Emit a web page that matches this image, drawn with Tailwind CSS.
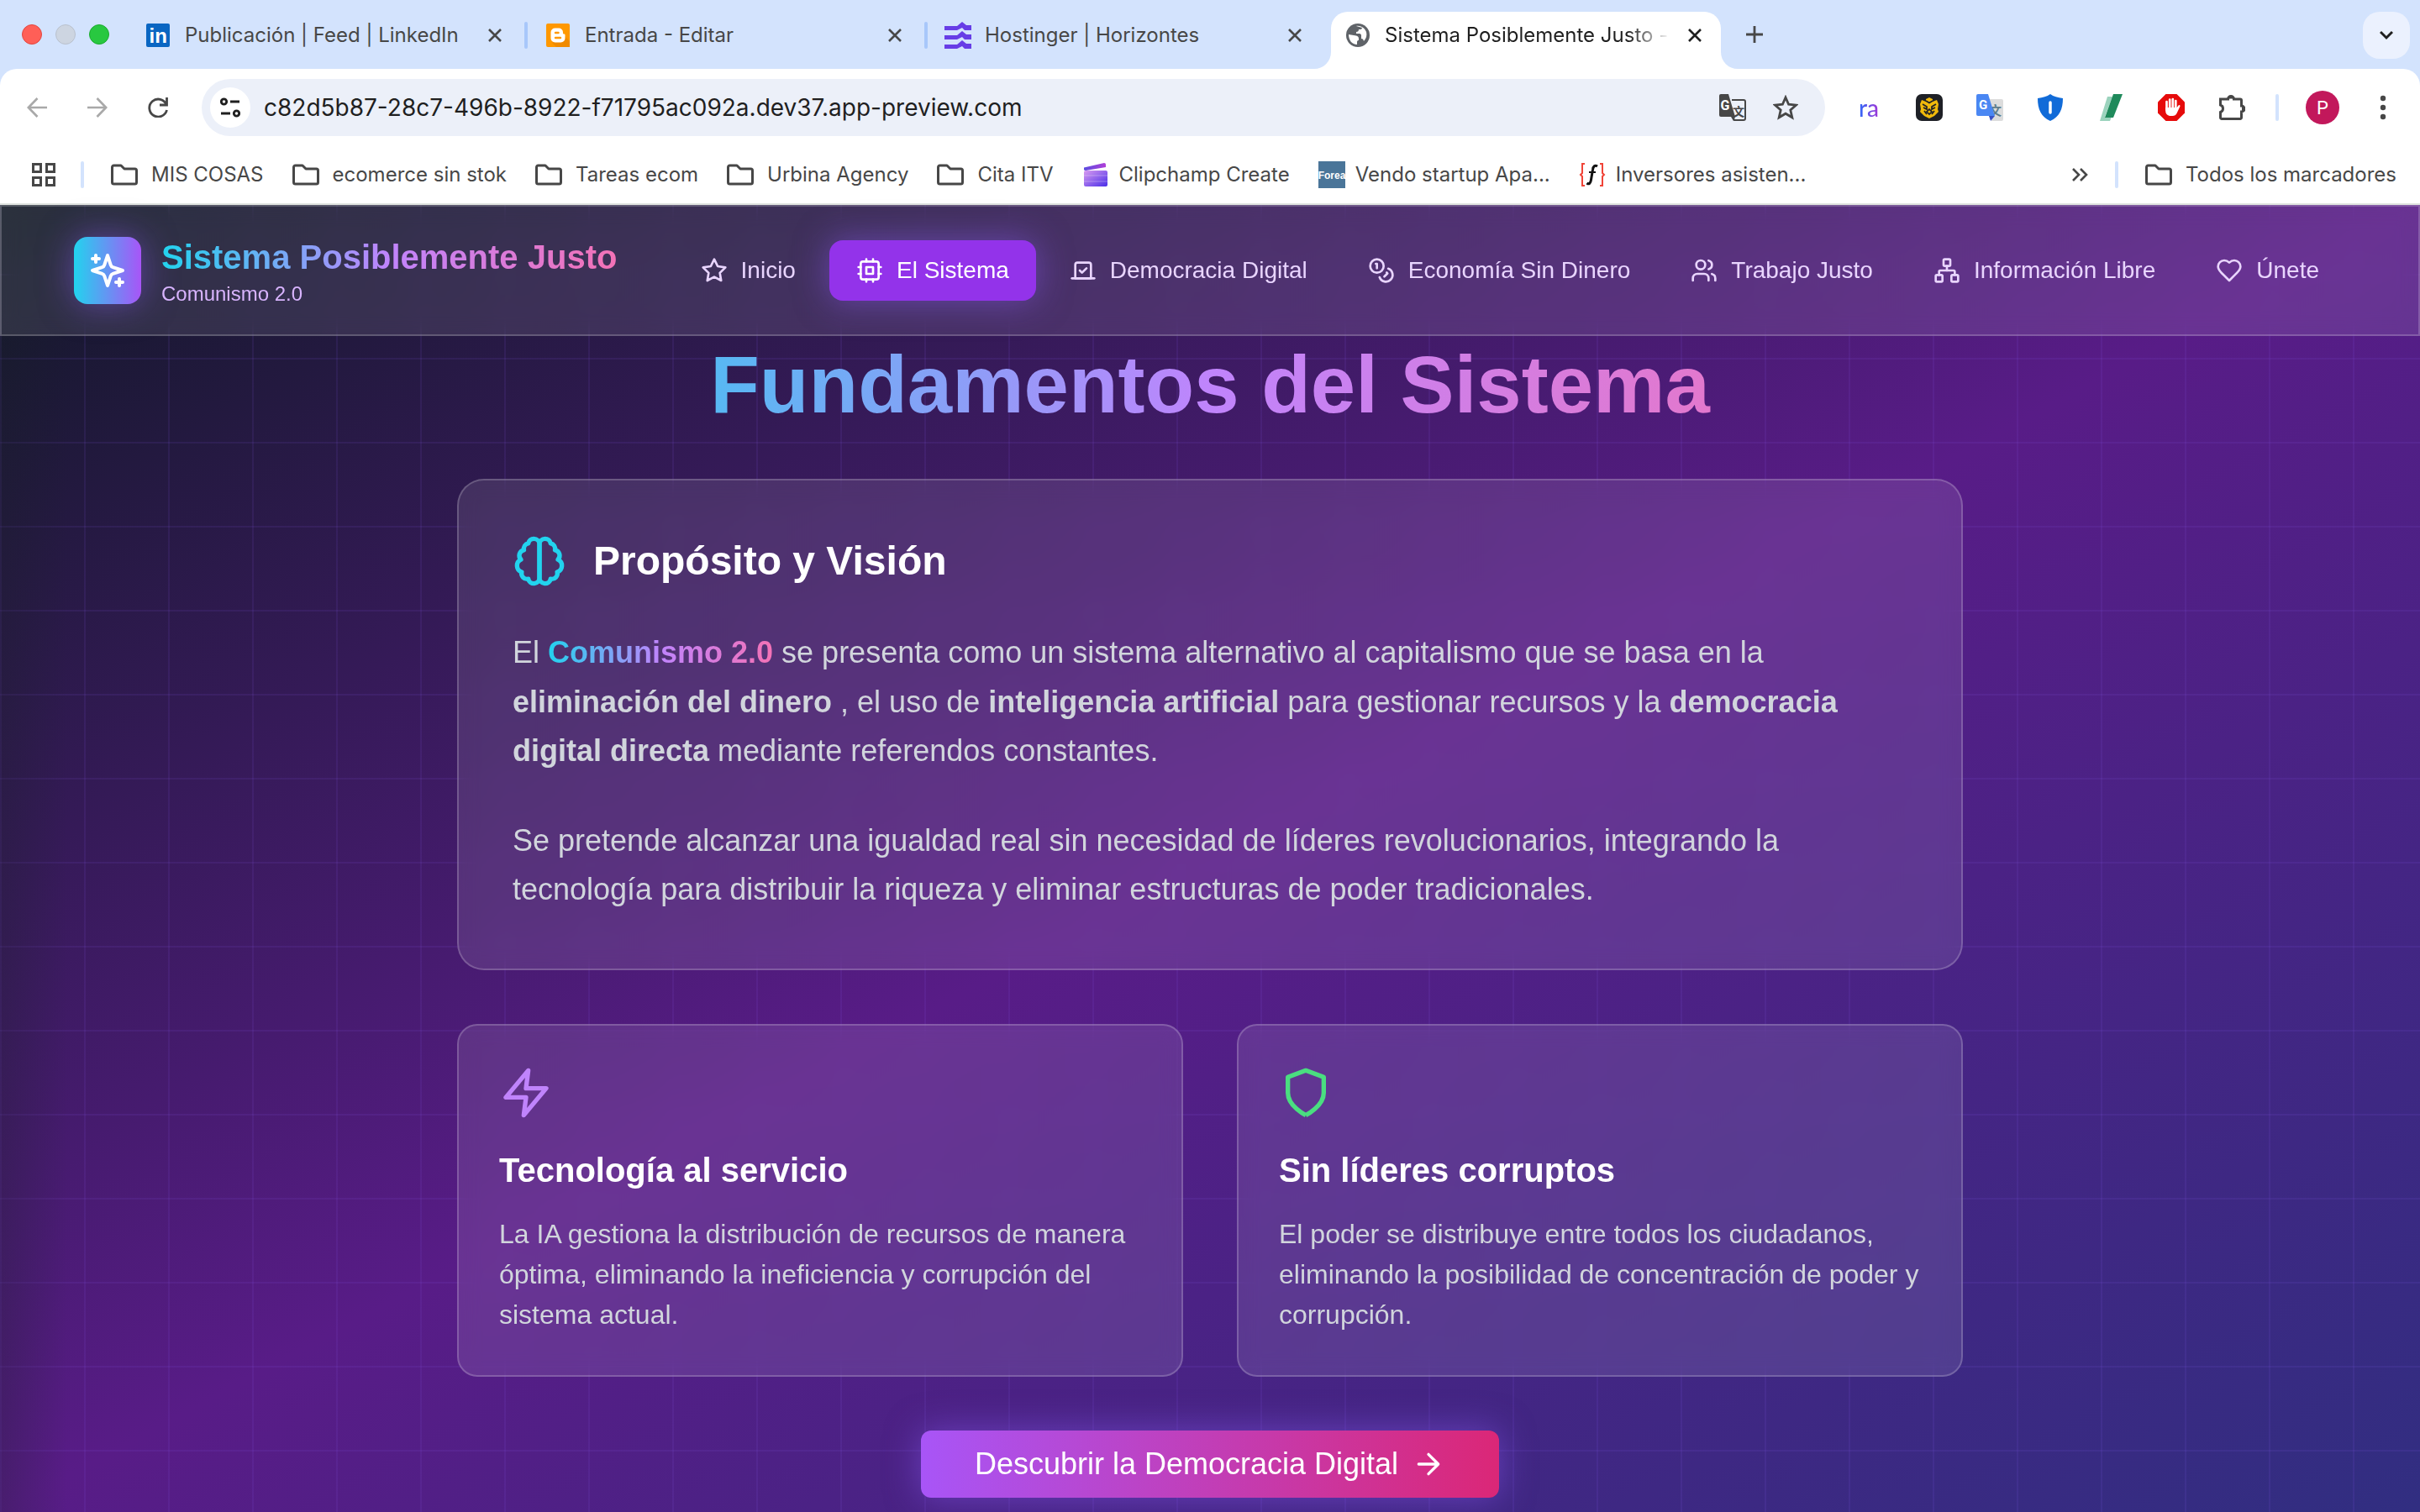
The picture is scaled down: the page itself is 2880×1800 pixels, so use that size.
<!DOCTYPE html>
<html lang="es">
<head>
    <meta charset="utf-8"/>
    <meta content="width=device-width, initial-scale=1.0" name="viewport"/>
    <title>Sistema Posiblemente Justo</title>
    <script src="https://cdn.jsdelivr.net/npm/@tailwindcss/browser@4"></script>
</head>
<body class="min-h-screen flex flex-col bg-[#d3e3fd] font-['Inter',sans-serif] text-[#474747]">
    <!-- shared icons -->
    <svg class="hidden" aria-hidden="true">
        <symbol id="close" viewBox="0 0 18 18"><path d="M2 2l14 14M16 2L2 16" fill="none" stroke="currentColor" stroke-width="2.6"/></symbol>
        <symbol id="folder" viewBox="0 0 32 26"><path d="M3.5 2h8.5l4 4h12.500a2 2 0 0 1 2 2v14a2 2 0 0 1-2 2h-25a2 2 0 0 1-2-2V4a2 2 0 0 1 2-2z" fill="none" stroke="currentColor" stroke-width="3" stroke-linejoin="round"/></symbol>
    </svg>

    <!-- tab strip -->
    <div class="flex h-[82px] pl-[26px]">
        <div class="flex items-center gap-4 w-[124px] shrink-0">
            <span class="size-6 rounded-full bg-[#ff5f57] border border-[#e2463f]"></span>
            <span class="size-6 rounded-full bg-[#cdd5e1] border border-[#b9c1cd]"></span>
            <span class="size-6 rounded-full bg-[#28c840] border border-[#1aab2c]"></span>
        </div>
        <div class="grid grid-cols-4 flex-1 max-w-[1904px]">
            <div class="relative flex items-center px-6 pt-0.5">
                <svg class="size-7 shrink-0" viewBox="0 0 28 28"><rect width="28" height="28" rx="2" fill="#0a66c2"/><text x="3.500" y="23" font-family="Liberation Sans" font-weight="700" font-size="24" fill="#fff">in</text></svg>
                <button class="ml-[18px] flex-1 text-left text-[24px] whitespace-nowrap overflow-hidden">Publicación | Feed | LinkedIn</button>
                <button aria-label="Cerrar" class="mr-1"><svg class="size-[18px]"><use href="#close"/></svg></button>
                <span class="absolute -right-0.5 top-[26px] h-8 w-1 rounded-full bg-[#a8c7fa]"></span>
            </div>
            <div class="relative flex items-center px-6 pt-0.5">
                <svg class="size-7 shrink-0" viewBox="0 0 28 28"><rect width="28" height="28" rx="2" fill="#ff9800"/><path d="M22 15l6 6v7H12l-5-5z" fill="#f08a00"/><path d="M10.500 5.500h4.500a5 5 0 0 1 5 5v.5c0 1 .5 1.500 1.300 1.500.7 0 1.200.5 1.200 1.200V17.500a5 5 0 0 1-5 5h-7a5 5 0 0 1-5-5v-7a5 5 0 0 1 5-5z" fill="#fff"/><path d="M11 11h3.500M11 17h6" stroke="#ff9800" stroke-width="2.400" stroke-linecap="round"/></svg>
                <button class="ml-[18px] flex-1 text-left text-[24px] whitespace-nowrap overflow-hidden">Entrada - Editar</button>
                <button aria-label="Cerrar" class="mr-1"><svg class="size-[18px]"><use href="#close"/></svg></button>
                <span class="absolute -right-0.5 top-[26px] h-8 w-1 rounded-full bg-[#a8c7fa]"></span>
            </div>
            <div class="relative flex items-center px-[22px] pt-0.5">
                <svg class="size-8 shrink-0" viewBox="0 0 32 32" fill="#673de6"><path d="M0 5h15l6-5 5 4h6v6h-8l-3-3-6 3H0zM0 16h15l6-5 5 4h6v6h-8l-3-3-6 3H0zM0 27h15l6-5 5 4h6v6h-8l-3-3-6 3H0z"/></svg>
                <button class="ml-4 flex-1 text-left text-[24px] whitespace-nowrap overflow-hidden">Hostinger | Horizontes</button>
                <button aria-label="Cerrar" class="mr-1.5"><svg class="size-[18px]"><use href="#close"/></svg></button>
            </div>
            <div class="relative flex px-1.5 pt-3.5">
                <div class="relative flex flex-1 items-center rounded-t-[20px] bg-white pl-[18px] pr-[18px] pb-3 text-[#1f1f1f]">
                    <svg class="absolute -left-5 bottom-0 size-5" viewBox="0 0 20 20"><path d="M20 0v20H0A20 20 0 0 0 20 0z" fill="#fff"/></svg>
                    <svg class="absolute -right-5 bottom-0 size-5" viewBox="0 0 20 20"><path d="M0 0v20h20A20 20 0 0 1 0 0z" fill="#fff"/></svg>
                    <svg class="size-7 shrink-0" viewBox="0 0 28 28"><circle cx="14" cy="14" r="14" fill="#5f6368"/><path d="M3 13l9 1.500c2 .5 3 1.500 3 3.500v2c-1 0-2 .5-2 2v3C7 25 3 20 3 13zM12 3c5-1 10 2 12 7 1 4 0 8-3 11-.5-2-1-3-3-3v-4c0-1-1-2-2-2h-4v-2c2 0 3-1 3-3h2c1 0 2-1 2-2z" fill="#fff"/></svg>
                    <button class="ml-[18px] flex-1 text-left text-[24px] whitespace-nowrap overflow-hidden bg-linear-to-r from-[#1f1f1f] from-85% to-transparent bg-clip-text text-transparent">Sistema Posiblemente Justo -</button>
                    <button aria-label="Cerrar" class="ml-5 mr-1"><svg class="size-[18px]"><use href="#close"/></svg></button>
                </div>
            </div>
        </div>
        <button aria-label="Nueva pestaña" class="ml-6"><svg class="size-5" viewBox="0 0 20 20"><path d="M10 0v20M0 10h20" stroke="currentColor" stroke-width="2.800"/></svg></button>
        <button aria-label="Buscar pestañas" class="ml-auto mr-3 mt-3.5 size-14 rounded-[20px] bg-[#ebf1fe] flex items-center justify-center text-[#1f1f1f]"><svg class="w-4 h-3" viewBox="0 0 16 12"><path d="M1 2l7 7 7-7" fill="none" stroke="currentColor" stroke-width="3"/></svg></button>
    </div>

    <!-- toolbar -->
    <div class="flex items-center h-[92px] rounded-t-[20px] bg-white pl-8 pr-8">
        <div class="flex items-center gap-12 w-[208px] shrink-0">
            <button aria-label="Atrás" class="text-[#a9a9a9]"><svg class="size-6" viewBox="0 0 24 24"><path d="M24 12H2M12.500 1L1.800 12l10.700 11" fill="none" stroke="currentColor" stroke-width="2.700"/></svg></button>
            <button aria-label="Adelante" class="text-[#a9a9a9]"><svg class="size-6" viewBox="0 0 24 24"><path d="M0 12h22M11.500 1l10.700 11-10.700 11" fill="none" stroke="currentColor" stroke-width="2.700"/></svg></button>
            <button aria-label="Recargar"><svg class="size-6" viewBox="0 0 24 24"><path d="M22.500 0v9H14M22 8.500A10.500 10.500 0 1 0 22.500 15" fill="none" stroke="currentColor" stroke-width="2.800"/></svg></button>
        </div>
        <div class="flex items-center flex-1 h-[68px] rounded-full bg-[#ecf0f9] pl-2.5 pr-8">
            <button aria-label="Información del sitio" class="size-12 rounded-full bg-white flex items-center justify-center text-[#1f1f1f]"><svg class="w-6 h-6" viewBox="0 0 24 24" fill="none" stroke="currentColor" stroke-width="2.800"><circle cx="4.500" cy="5" r="3.200"/><path d="M12 5h11M1 19h11"/><circle cx="19.500" cy="19" r="3.200"/></svg></button>
            <input aria-label="Dirección" class="ml-4 flex-1 bg-transparent text-[28px] text-[#1f1f1f] outline-none" type="text" value="c82d5b87-28c7-496b-8922-f71795ac092a.dev37.app-preview.com"/>
            <button aria-label="Traducir"><svg class="size-8" viewBox="0 0 32 32"><path d="M15 7h14a2 2 0 0 1 2 2v20a2 2 0 0 1-2 2H18l-4-8" fill="none" stroke="#474747" stroke-width="2"/><path d="M2 0h9l8 27H2a2 2 0 0 1-2-2V2a2 2 0 0 1 2-2z" fill="#474747"/><path d="M14 27h5l-2 5z" fill="#474747"/><text x="1.500" y="19" font-family="Roboto" font-weight="700" font-size="16" fill="#fff">G</text><text x="16" y="26" font-family="Noto Sans CJK SC" font-size="14" font-weight="700" fill="#474747">文</text></svg></button>
            <button aria-label="Añadir a marcadores" class="ml-8"><svg class="size-[30px]" viewBox="0 0 30 30"><path d="M15 3l3.600 8.200 8.900.9-6.700 5.900 2 8.800L15 22.200l-7.800 4.600 2-8.800-6.700-5.900 8.900-.9z" fill="none" stroke="currentColor" stroke-width="2.800"/></svg></button>
        </div>
        <div class="flex items-center ml-9 gap-10">
            <button aria-label="ra" class="w-8 h-8 text-[28px]/[28px] font-medium bg-linear-to-r/srgb from-[#1a73ff] to-[#b62bd0] bg-clip-text text-transparent font-['Lato',sans-serif]">ra</button>
            <button aria-label="Monedero"><svg class="size-8" viewBox="0 0 32 32"><rect width="32" height="32" rx="7" fill="#1e2026"/><path d="M16 4l4 2v3l5-2 2 5-1 6 1 3-5 5-6 3-6-3-5-5 1-3-1-6 2-5 5 2V6z" fill="#f0b90b"/><path d="M8 12l5 3v3l-4-2M24 12l-5 3v3l4-2M10 20l3 4M22 20l-3 4M16 18l3 3-3 3-3-3zM12 8l4 2.500L20 8" fill="none" stroke="#1e2026" stroke-width="1.700"/></svg></button>
            <button aria-label="Google Traductor"><svg class="size-8" viewBox="0 0 32 32"><path d="M12 6h18a2 2 0 0 1 2 2v22a2 2 0 0 1-2 2H18z" fill="#dcdcdc"/><text x="15" y="25" font-family="Noto Sans CJK SC" font-size="15" font-weight="700" fill="#607d8b">文</text><path d="M15 26h7l-5 6z" fill="#3a52c4"/><path d="M2 0h12l8 26H2a2 2 0 0 1-2-2V2a2 2 0 0 1 2-2z" fill="#4a87f3"/><text x="3" y="18" font-family="Roboto" font-weight="700" font-size="15" fill="#fff">G</text></svg></button>
            <button aria-label="Protección"><svg class="size-8" viewBox="0 0 32 32"><path d="M16 0c4 3 9 4 15 5 0 13-4 22-15 27C5 27 1 18 1 5 7 4 12 3 16 0z" fill="#116bd8"/><path d="M16 10v12" stroke="#fff" stroke-width="3.500" stroke-linecap="round"/></svg></button>
            <button aria-label="Notas"><svg class="size-8" viewBox="0 0 32 32"><path d="M12 3h6L9 27h8l-2 5H3z" fill="#9bd3bd"/><path d="M19 0h11L19 28H9z" fill="#1f8a5b"/></svg></button>
            <button aria-label="Bloqueador de anuncios"><svg class="size-8" viewBox="0 0 32 32"><path d="M9.500 0h13L32 9.500v13L22.500 32h-13L0 22.500v-13z" fill="#e60b0b"/><path d="M10.500 9v10M14.200 6.500V18M17.800 6V18M21.300 8v12" stroke="#fff" stroke-width="2.700" stroke-linecap="round"/><path d="M9.200 16h13.400l2-2.500c1-1 2.400 0 1.800 1.300L22.500 23c-1 2-2.500 3-5 3h-2c-4 0-6.300-2.500-6.300-6z" fill="#fff"/></svg></button>
            <button aria-label="Extensiones"><svg class="size-8" viewBox="0 0 32 32"><path d="M3 6h8.500a3.500 3.500 0 0 1 7 0H26a1.500 1.500 0 0 1 1.500 1.500v6.500a3.500 3.500 0 0 1 0 7v7A1.500 1.500 0 0 1 26 29.500H4A1.500 1.500 0 0 1 2.500 28v-6.500a4.500 4.500 0 0 0 0-8.500V6z" fill="none" stroke="currentColor" stroke-width="3"/><path d="M11.500 5.500a3.500 3.500 0 0 1 7 0zM28 14a3.500 3.500 0 0 1 0 7z" fill="currentColor"/></svg></button>
        </div>
        <span class="ml-9 h-8 w-1 rounded-full bg-[#d3e3fd]"></span>
        <button aria-label="Perfil" class="ml-8 size-10 rounded-full bg-[#c2185b] text-white text-[22px] font-['Roboto',sans-serif]">P</button>
        <button aria-label="Menú" class="ml-10"><svg class="w-6 h-8" viewBox="0 0 24 32" fill="currentColor"><circle cx="12" cy="5" r="3.200"/><circle cx="12" cy="16" r="3.200"/><circle cx="12" cy="27" r="3.200"/></svg></button>
    </div>

    <!-- bookmarks bar -->
    <div class="flex items-center h-[70px] bg-white border-b-2 border-[#dfe3df] pl-[38px] pr-7 text-[24px] whitespace-nowrap">
        <button aria-label="Aplicaciones"><svg class="size-7" viewBox="0 0 28 28" fill="none" stroke="currentColor" stroke-width="3"><path d="M1.500 1.500h9v9h-9zM17.500 1.500h9v9h-9zM1.500 17.500h9v9h-9zM17.500 17.500h9v9h-9z"/></svg></button>
        <span class="ml-[30px] mr-8 h-8 w-1 rounded-full bg-[#d3e3fd]"></span>
        <div class="flex items-center gap-[34px]">
            <a href="#" class="flex items-center gap-4"><svg class="w-8 h-[26px]"><use href="#folder"/></svg>MIS COSAS</a>
            <a href="#" class="flex items-center gap-4"><svg class="w-8 h-[26px]"><use href="#folder"/></svg>ecomerce sin stok</a>
            <a href="#" class="flex items-center gap-4"><svg class="w-8 h-[26px]"><use href="#folder"/></svg>Tareas ecom</a>
            <a href="#" class="flex items-center gap-4"><svg class="w-8 h-[26px]"><use href="#folder"/></svg>Urbina Agency</a>
            <a href="#" class="flex items-center gap-4"><svg class="w-8 h-[26px]"><use href="#folder"/></svg>Cita ITV</a>
            <a href="#" class="flex items-center gap-3"><svg class="w-8 h-7" viewBox="0 0 32 28"><defs><linearGradient id="clip" x1="0" y1="0" x2="1" y2="1"><stop offset="0" stop-color="#d99af0"/><stop offset="1" stop-color="#4a2fe8"/></linearGradient><linearGradient id="clap"><stop offset="0" stop-color="#5a4be0"/><stop offset="1" stop-color="#b03fd8"/></linearGradient></defs><path d="M2 5.500L26 0q2 0 2 2v3L4 9q-2 0-2-1.500z" fill="url(#clap)"/><rect x="2" y="9" width="28" height="19" rx="2" fill="url(#clip)"/><path d="M2 15h28M2 22h28" stroke="#fff" stroke-opacity=".15" stroke-width="2"/></svg>Clipchamp Create</a>
            <a href="#" class="flex items-center gap-3"><svg class="size-8" viewBox="0 0 32 32"><rect width="32" height="32" fill="#4a7599"/><text x="16" y="21" text-anchor="middle" font-family="Liberation Sans" font-weight="700" font-size="12" fill="#fff">Forea</text></svg>Vendo startup Apa...</a>
            <a href="#" class="flex items-center gap-3"><svg class="w-8 h-7" viewBox="0 0 32 28"><path d="M7 1H4v11l-2 2 2 2v11h3M25 1h3v11l2 2-2 2v11h-3" fill="none" stroke="#f04438" stroke-width="2"/><path d="M22 4c-3-2-5 0-5.500 4l-2 12c-.5 4-2.500 6-5 4" fill="none" stroke="#111" stroke-width="3"/><path d="M12 11h8" stroke="#111" stroke-width="2"/></svg>Inversores asisten...</a>
        </div>
        <button aria-label="Más marcadores" class="ml-auto"><svg class="w-5 h-4" viewBox="0 0 20 16"><path d="M2 1l7 7-7 7M11 1l7 7-7 7" fill="none" stroke="currentColor" stroke-width="2.600"/></svg></button>
        <span class="mx-8 h-8 w-1 rounded-full bg-[#d3e3fd]"></span>
        <a href="#" class="flex items-center gap-4"><svg class="w-8 h-[26px]"><use href="#folder"/></svg>Todos los marcadores</a>
    </div>

    <!-- site -->
    <div class="relative flex-1 bg-linear-to-br/srgb from-[#111827] via-[#581c87] to-[#312e81] font-['Liberation_Sans',Helvetica,Arial,sans-serif]">
        <div class="absolute inset-0 bg-[linear-gradient(rgba(139,92,246,0.1)_2px,transparent_2px),linear-gradient(90deg,rgba(139,92,246,0.1)_2px,transparent_2px)] bg-size-[100px_100px] bg-position-[0_82px]"></div>
        <div class="absolute inset-y-0 left-0 w-20 bg-linear-to-r from-[#1a2226]/25 to-transparent"></div>

        <header class="relative flex items-center justify-between bg-white/10 backdrop-blur-md border-2 border-white/20 px-[86px] py-8">
            <div class="flex items-center gap-6">
                <div class="size-20 rounded-2xl bg-linear-to-r/srgb from-[#22d3ee] to-[#a855f7] flex items-center justify-center shadow-[0_0_40px_rgba(139,92,246,0.5)]">
                    <svg class="size-12 text-white" viewBox="0 0 24 24" fill="none" stroke="currentColor" stroke-width="2" stroke-linecap="round" stroke-linejoin="round"><path d="m12 3-1.912 5.813a2 2 0 0 1-1.275 1.275L3 12l5.813 1.912a2 2 0 0 1 1.275 1.275L12 21l1.912-5.813a2 2 0 0 1 1.275-1.275L21 12l-5.813-1.912a2 2 0 0 1-1.275-1.275L12 3Z"/><path d="M5 3v4M19 17v4M3 5h4M17 19h4"/></svg>
                </div>
                <div>
                    <span class="block text-[40px]/[56px] font-bold bg-linear-to-r/srgb from-[#22d3ee] via-[#c084fc] to-[#f472b6] bg-clip-text text-transparent">Sistema Posiblemente Justo</span>
                    <p class="text-[24px]/[32px] text-[#d8b4fe]">Comunismo 2.0</p>
                </div>
            </div>
            <nav class="flex items-center gap-2 text-[28px]/[40px] text-[#e9d5ff]">
                <a href="#" class="flex items-center gap-4 rounded-2xl px-8 py-4">
                    <svg class="size-8" viewBox="0 0 24 24" fill="none" stroke="currentColor" stroke-width="2" stroke-linecap="round" stroke-linejoin="round"><path d="M12 2l3.090 6.260L22 9.270l-5 4.870 1.180 6.880L12 17.770l-6.180 3.250L7 14.140 2 9.270l6.910-1.010L12 2z"/></svg>
                    Inicio
                </a>
                <a href="#" class="flex items-center gap-4 rounded-2xl px-8 py-4 bg-[#9333ea] text-white shadow-[0_0_40px_rgba(139,92,246,0.5)]">
                    <svg class="size-8" viewBox="0 0 24 24" fill="none" stroke="currentColor" stroke-width="2" stroke-linecap="round" stroke-linejoin="round"><rect x="4" y="4" width="16" height="16" rx="2"/><rect x="9" y="9" width="6" height="6"/><path d="M15 2v2M15 20v2M2 15h2M2 9h2M20 15h2M20 9h2M9 2v2M9 20v2"/></svg>
                    El Sistema
                </a>
                <a href="#" class="flex items-center gap-4 rounded-2xl px-8 py-4">
                    <svg class="size-8" viewBox="0 0 24 24" fill="none" stroke="currentColor" stroke-width="2" stroke-linecap="round" stroke-linejoin="round"><path d="m9 12 2 2 4-4"/><path d="M5 7c0-1.100.9-2 2-2h10a2 2 0 0 1 2 2v12H5V7Z"/><path d="M22 19H2"/></svg>
                    Democracia Digital
                </a>
                <a href="#" class="flex items-center gap-4 rounded-2xl px-8 py-4">
                    <svg class="size-8" viewBox="0 0 24 24" fill="none" stroke="currentColor" stroke-width="2" stroke-linecap="round" stroke-linejoin="round"><circle cx="8" cy="8" r="6"/><path d="M18.090 10.370A6 6 0 1 1 10.340 18"/><path d="M7 6h1v4"/><path d="m16.710 13.880.7.710-2.820 2.820"/></svg>
                    Economía Sin Dinero
                </a>
                <a href="#" class="flex items-center gap-4 rounded-2xl px-8 py-4">
                    <svg class="size-8" viewBox="0 0 24 24" fill="none" stroke="currentColor" stroke-width="2" stroke-linecap="round" stroke-linejoin="round"><path d="M16 21v-2a4 4 0 0 0-4-4H6a4 4 0 0 0-4 4v2"/><circle cx="9" cy="7" r="4"/><path d="M22 21v-2a4 4 0 0 0-3-3.870"/><path d="M16 3.130a4 4 0 0 1 0 7.750"/></svg>
                    Trabajo Justo
                </a>
                <a href="#" class="flex items-center gap-4 rounded-2xl px-8 py-4">
                    <svg class="size-8" viewBox="0 0 24 24" fill="none" stroke="currentColor" stroke-width="2" stroke-linecap="round" stroke-linejoin="round"><rect x="16" y="16" width="6" height="6" rx="1"/><rect x="2" y="16" width="6" height="6" rx="1"/><rect x="9" y="2" width="6" height="6" rx="1"/><path d="M5 16v-3a1 1 0 0 1 1-1h12a1 1 0 0 1 1 1v3"/><path d="M12 12V8"/></svg>
                    Información Libre
                </a>
                <a href="#" class="flex items-center gap-4 rounded-2xl px-8 py-4">
                    <svg class="size-8" viewBox="0 0 24 24" fill="none" stroke="currentColor" stroke-width="2" stroke-linecap="round" stroke-linejoin="round"><path d="M19 14c1.490-1.460 3-3.210 3-5.500A5.500 5.500 0 0 0 16.500 3c-1.760 0-3 .5-4.500 2-1.500-1.500-2.740-2-4.500-2A5.500 5.500 0 0 0 2 8.500c0 2.300 1.500 4.050 3 5.500l7 7Z"/></svg>
                    Únete
                </a>
            </nav>
        </header>

        <main class="relative mx-auto max-w-[1792px] pt-2.5">
            <h1 class="text-center text-[96px]/[96px] font-bold bg-linear-to-r/srgb from-[#22d3ee] via-[#c084fc] to-[#f472b6] bg-clip-text text-transparent">Fundamentos del Sistema</h1>

            <section class="mt-16 rounded-[32px] border-2 border-white/20 bg-white/10 backdrop-blur-md p-16">
                <div class="flex items-center gap-8">
                    <svg class="size-16 text-[#22d3ee]" viewBox="0 0 24 24" fill="none" stroke="currentColor" stroke-width="2" stroke-linecap="round" stroke-linejoin="round"><path d="M9.500 2A2.500 2.500 0 0 1 12 4.500v15a2.500 2.500 0 0 1-4.960.44 2.500 2.500 0 0 1-2.960-3.080 3 3 0 0 1-.34-5.580 2.500 2.500 0 0 1 1.320-4.240 2.500 2.500 0 0 1 1.980-3A2.500 2.500 0 0 1 9.500 2Z"/><path d="M14.500 2A2.500 2.500 0 0 0 12 4.500v15a2.500 2.500 0 0 0 4.960.44 2.500 2.500 0 0 0 2.960-3.080 3 3 0 0 0 .34-5.580 2.500 2.500 0 0 0-1.320-4.240 2.500 2.500 0 0 0-1.980-3A2.500 2.500 0 0 0 14.500 2Z"/></svg>
                    <h2 class="text-[48px]/[64px] font-bold text-white">Propósito y Visión</h2>
                </div>
                <div class="mt-12 space-y-12 text-[36px] leading-relaxed text-gray-300">
                    <p>El <span class="font-bold bg-linear-to-r/srgb from-[#22d3ee] via-[#c084fc] to-[#f472b6] bg-clip-text text-transparent">Comunismo 2.0</span> se presenta como un sistema alternativo al capitalismo que se basa en la <strong>eliminación del dinero</strong> , el uso de <strong>inteligencia artificial</strong> para gestionar recursos y la <strong>democracia digital directa</strong> mediante referendos constantes.</p>
                    <p>Se pretende alcanzar una igualdad real sin necesidad de líderes revolucionarios, integrando la tecnología para distribuir la riqueza y eliminar estructuras de poder tradicionales.</p>
                </div>
            </section>

            <div class="mt-16 grid grid-cols-2 gap-16">
                <section class="rounded-[24px] border-2 border-white/20 bg-white/10 backdrop-blur-md p-12">
                    <svg class="size-16 text-[#c084fc]" viewBox="0 0 24 24" fill="none" stroke="currentColor" stroke-width="2" stroke-linecap="round" stroke-linejoin="round"><path d="M13 2 3 14h9l-1 8 10-12h-9l1-8z"/></svg>
                    <h3 class="mt-8 text-[40px]/[56px] font-bold text-white">Tecnología al servicio</h3>
                    <p class="mt-6 text-[32px]/[48px] text-gray-300">La IA gestiona la distribución de recursos de manera óptima, eliminando la ineficiencia y corrupción del sistema actual.</p>
                </section>
                <section class="rounded-[24px] border-2 border-white/20 bg-white/10 backdrop-blur-md p-12">
                    <svg class="size-16 text-[#4ade80]" viewBox="0 0 24 24" fill="none" stroke="currentColor" stroke-width="2" stroke-linejoin="round"><path d="M12 22s8-4 8-10V5l-8-3-8 3v7c0 6 8 10 8 10"/></svg>
                    <h3 class="mt-8 text-[40px]/[56px] font-bold text-white">Sin líderes corruptos</h3>
                    <p class="mt-6 text-[32px]/[48px] text-gray-300">El poder se distribuye entre todos los ciudadanos, eliminando la posibilidad de concentración de poder y corrupción.</p>
                </section>
            </div>

            <div class="mt-16 flex justify-center">
                <button class="flex items-center gap-4 h-20 px-16 rounded-xl bg-linear-to-r/srgb from-[#a855f7] to-[#db2777] text-[36px] text-white shadow-[0_0_40px_rgba(139,92,246,0.5)]">
                    Descubrir la Democracia Digital
                    <svg class="size-10" viewBox="0 0 24 24" fill="none" stroke="currentColor" stroke-width="2" stroke-linecap="round" stroke-linejoin="round"><path d="M5 12h14M12 5l7 7-7 7"/></svg>
                </button>
            </div>
        </main>
    </div>
</body>
</html>
